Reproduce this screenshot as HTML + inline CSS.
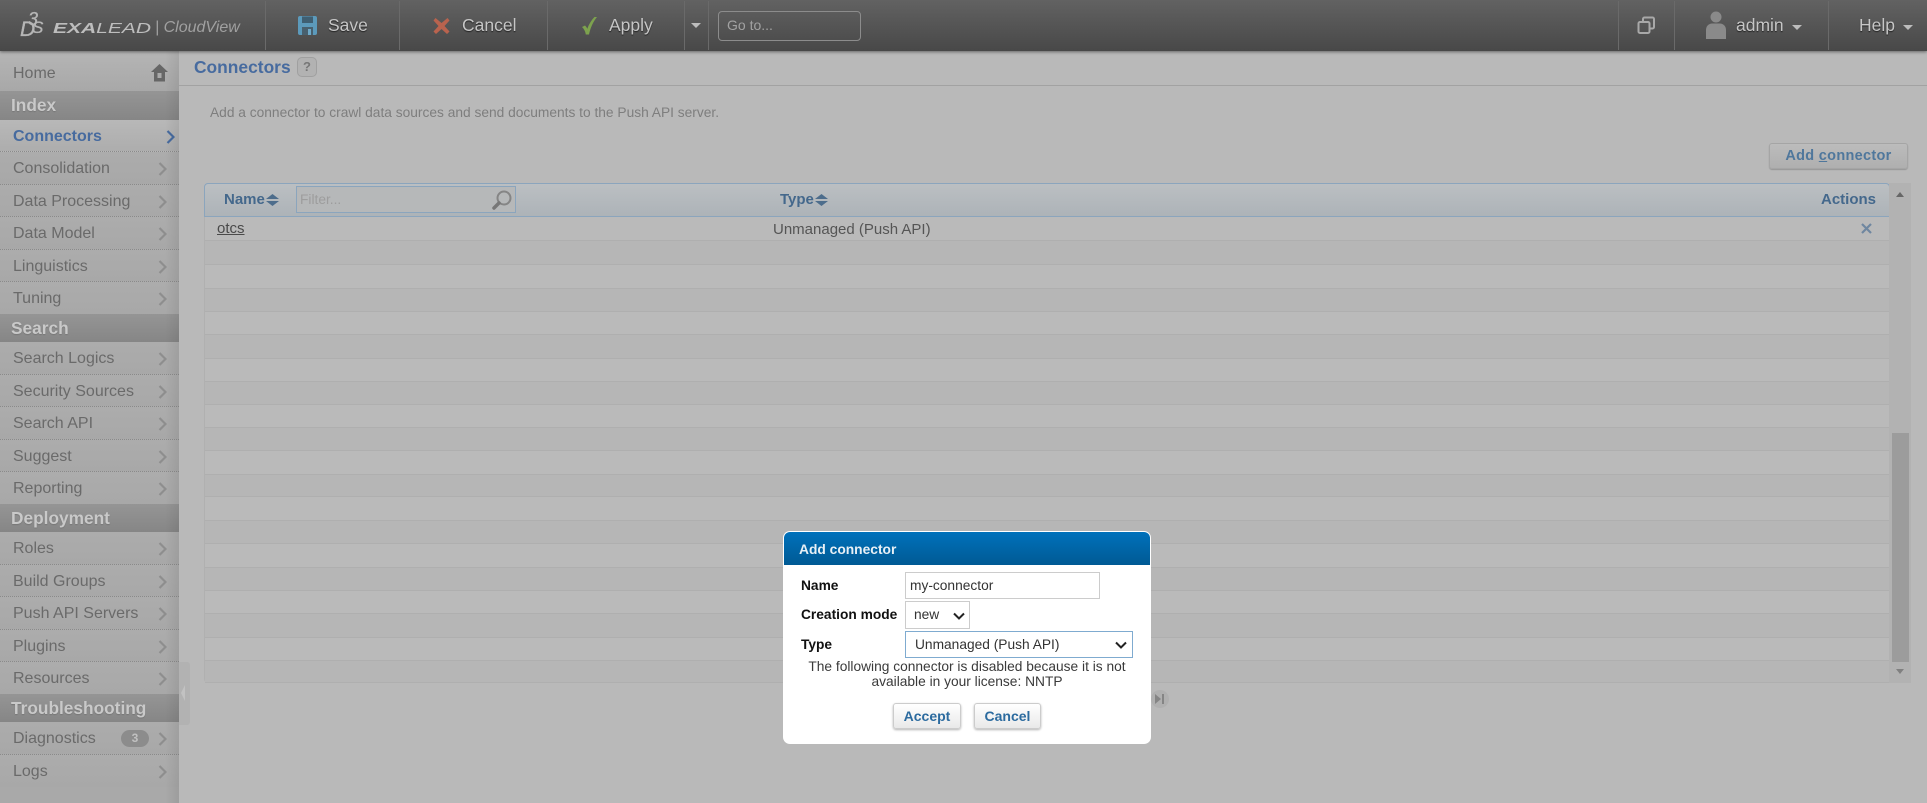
<!DOCTYPE html>
<html><head><meta charset="utf-8"><title>Connectors</title>
<style>
html,body{margin:0;padding:0;width:1927px;height:803px;overflow:hidden;background:#b9b9b9;font-family:"Liberation Sans",Arial,sans-serif;}
.a{position:absolute;white-space:nowrap}
#top{position:absolute;left:0;top:0;width:1927px;height:51px;background:linear-gradient(#626262,#484848);box-shadow:0 1px 3px rgba(0,0,0,.45);z-index:3}
.sep{position:absolute;top:1px;width:1px;height:49px;background:#6a6a6a}
.tt{position:absolute;top:12px;line-height:26px;font-size:17.5px;color:#c6c6c6;text-shadow:0 1px 1px #222;white-space:nowrap}
#side{position:absolute;left:0;top:51px;width:179px;height:752px;background:#a9a9a9;}
#shade{position:absolute;left:165px;top:51px;width:14px;height:752px;background:linear-gradient(90deg,rgba(0,0,0,0),rgba(0,0,0,.07));z-index:2}
.r{position:absolute;left:0;width:179px;box-sizing:border-box;padding-left:13px;padding-top:1px;font-size:16px;color:#6a6a6a;border-bottom:1px dotted #8a8a8a;background:linear-gradient(#acacac,#a8a8a8)}
.r svg{position:absolute;left:158px;top:50%;margin-top:-6px}
.h{position:absolute;left:0;width:179px;box-sizing:border-box;padding-left:11px;font-size:17.3px;font-weight:bold;color:#c9c9c9;background:linear-gradient(#959595,#868686);text-shadow:0 1px 1px #777}
.row{position:absolute;left:205px;width:1684px;box-sizing:border-box;border-bottom:1px solid #afafaf}
.th{position:absolute;top:183px;font-size:15px;font-weight:bold;color:#44688c;line-height:33px}
.lbl{position:absolute;font-size:13.75px;font-weight:bold;color:#111;white-space:nowrap;line-height:20px}
.fld{position:absolute;box-sizing:border-box;background:#fff;border:1px solid #ccc;font-size:13.75px;color:#333;white-space:nowrap}
.btn{position:absolute;top:703px;height:26px;box-sizing:border-box;border:1px solid #ccc;border-radius:3px;background:linear-gradient(#fff,#e9e9e9);box-shadow:0 1px 2px rgba(0,0,0,.3);font-size:14px;font-weight:bold;color:#2c6b9f;text-align:center;line-height:24px}
</style></head><body>

<div id="top">
  <svg class="a" style="left:20px;top:9px" width="30" height="30" viewBox="0 0 30 30" font-family="Liberation Sans" font-style="italic" fill="#b6b6b6" stroke="#b6b6b6" stroke-width=".35"><text x="8" y="16" font-size="18">3</text><text x="0" y="27" font-size="21">D</text><text x="12" y="24" font-size="17">S</text></svg>
  <div class="a" style="left:53px;top:20px;font-size:15px;line-height:17px;font-weight:bold;font-style:italic;color:#bdbdbd;transform:scaleX(1.4);transform-origin:0 0;letter-spacing:0"><span>EXA</span><span style="font-weight:normal">LEAD</span></div>
  <div class="a" style="left:155px;top:18px;font-size:16px;line-height:20px;font-style:italic;color:#a0a0a0">| CloudView</div>
  <div class="sep" style="left:265px"></div><div class="sep" style="left:399px"></div><div class="sep" style="left:547px"></div><div class="sep" style="left:684px"></div><div class="sep" style="left:708px"></div>
  <div class="sep" style="left:1618px"></div><div class="sep" style="left:1674px"></div><div class="sep" style="left:1828px"></div>

  <svg class="a" style="left:297px;top:15px" width="21" height="21" viewBox="0 0 21 21"><path d="M1 3a2 2 0 0 1 2-2h15a2 2 0 0 1 2 2v15a2 2 0 0 1-2 2H3a2 2 0 0 1-2-2z" fill="#5c9abb"/><rect x="5" y="1.500" width="11" height="6.500" fill="#3f5f72"/><rect x="5" y="12" width="11" height="8" fill="#48606e"/><rect x="11" y="14" width="3" height="6" fill="#6fa9c8"/></svg>
  <div class="tt" style="left:328px">Save</div>
  <svg class="a" style="left:433px;top:17px" width="17" height="18" viewBox="0 0 17 18"><path d="M2.500 1L8.500 6 14.500 1 16.500 3.500 11.500 9 16.500 14.500 14 17 8.500 12 3 17 .5 14.500 5.500 9 .5 3.500z" fill="#b9634e"/></svg>
  <div class="tt" style="left:462px">Cancel</div>
  <svg class="a" style="left:581px;top:16px" width="17" height="19" viewBox="0 0 17 19"><path d="M16 1C12 6 9.500 11.500 8 18.500H4.800C4.300 15 3 13 1 11l3-1.500c1 1 1.800 2 2.300 3.200C8 8 10.500 4 13.500 1z" fill="#7da24e"/></svg>
  <div class="tt" style="left:609px">Apply</div>
  <div class="a" style="left:691px;top:23px;width:0;height:0;border-left:5.500px solid transparent;border-right:5.500px solid transparent;border-top:5px solid #bdbdbd"></div>
  <div class="a" style="left:718px;top:11px;width:143px;height:30px;box-sizing:border-box;border:1px solid #8c8c8c;border-radius:4px;font-size:14px;line-height:26px;color:#a2a2a2;padding-left:8px">Go to...</div>

  <svg class="a" style="left:1637px;top:16px" width="19" height="19" viewBox="0 0 19 19" fill="none" stroke="#a8a8a8" stroke-width="2"><rect x="1.500" y="6" width="11" height="11" rx="1.500"/><path d="M6 5V3a1.500 1.500 0 0 1 1.500-1.500h8A1.500 1.500 0 0 1 17 3v8a1.500 1.500 0 0 1-1.500 1.500H13"/></svg>
  <svg class="a" style="left:1705px;top:11px" width="22" height="28" viewBox="0 0 22 28"><circle cx="11" cy="6" r="5.500" fill="#8a8a8a"/><path d="M1 28V19c0-4 3-6.500 6-6.500h8c3 0 6 2.500 6 6.500v9z" fill="#8a8a8a"/></svg>
  <div class="tt" style="left:1736px">admin</div>
  <div class="a" style="left:1792px;top:25px;width:0;height:0;border-left:5.500px solid transparent;border-right:5.500px solid transparent;border-top:5px solid #bdbdbd"></div>
  <div class="tt" style="left:1859px">Help</div>
  <div class="a" style="left:1903px;top:25px;width:0;height:0;border-left:5.500px solid transparent;border-right:5.500px solid transparent;border-top:5px solid #bdbdbd"></div>
</div>

<svg width="0" height="0" style="position:absolute"><defs><symbol id="ch" viewBox="0 0 9 14"><path d="M1.500 1l6 6-6 6" fill="none" stroke="currentColor" stroke-width="2.200"/></symbol></defs></svg>

<div id="side"></div>
<div id="shade"></div>

<div class="r" style="top:51px;height:40px;line-height:41px;padding-top:2px;border:0;background:linear-gradient(#b5b5b5,#a8a8a8)">Home
  <svg class="a" style="left:151px;top:13px;margin-top:0" width="17" height="18" viewBox="0 0 17 18"><path d="M8.500 0L17 8h-3v9.500H3V8H0z" fill="#666"/><rect x="6.500" y="9" width="4" height="5" fill="#a9a9a9"/></svg></div>
<div class="h" style="top:91px;height:29px;line-height:29px">Index</div>
<div class="r" style="top:120px;height:32px;line-height:31px;font-weight:bold;color:#476b9f;background:linear-gradient(#b8b8b8,#adadad)">Connectors<svg width="9" height="14" style="color:#476b9f;left:166px"><use href="#ch"/></svg></div>
<div class="r" style="top:152px;height:33px;line-height:32px">Consolidation<svg width="9" height="14" style="color:#8e8e8e"><use href="#ch"/></svg></div>
<div class="r" style="top:185px;height:32px;line-height:31px">Data Processing<svg width="9" height="14" style="color:#8e8e8e"><use href="#ch"/></svg></div>
<div class="r" style="top:217px;height:33px;line-height:32px">Data Model<svg width="9" height="14" style="color:#8e8e8e"><use href="#ch"/></svg></div>
<div class="r" style="top:250px;height:32px;line-height:31px">Linguistics<svg width="9" height="14" style="color:#8e8e8e"><use href="#ch"/></svg></div>
<div class="r" style="top:282px;height:32px;line-height:32px;border:0">Tuning<svg width="9" height="14" style="color:#8e8e8e"><use href="#ch"/></svg></div>
<div class="h" style="top:314px;height:28px;line-height:29px">Search</div>
<div class="r" style="top:342px;height:33px;line-height:32px">Search Logics<svg width="9" height="14" style="color:#8e8e8e"><use href="#ch"/></svg></div>
<div class="r" style="top:375px;height:32px;line-height:31px">Security Sources<svg width="9" height="14" style="color:#8e8e8e"><use href="#ch"/></svg></div>
<div class="r" style="top:407px;height:33px;line-height:32px">Search API<svg width="9" height="14" style="color:#8e8e8e"><use href="#ch"/></svg></div>
<div class="r" style="top:440px;height:32px;line-height:31px">Suggest<svg width="9" height="14" style="color:#8e8e8e"><use href="#ch"/></svg></div>
<div class="r" style="top:472px;height:32px;line-height:32px;border:0">Reporting<svg width="9" height="14" style="color:#8e8e8e"><use href="#ch"/></svg></div>
<div class="h" style="top:504px;height:28px;line-height:29px">Deployment</div>
<div class="r" style="top:532px;height:33px;line-height:32px">Roles<svg width="9" height="14" style="color:#8e8e8e"><use href="#ch"/></svg></div>
<div class="r" style="top:565px;height:32px;line-height:31px">Build Groups<svg width="9" height="14" style="color:#8e8e8e"><use href="#ch"/></svg></div>
<div class="r" style="top:597px;height:33px;line-height:32px">Push API Servers<svg width="9" height="14" style="color:#8e8e8e"><use href="#ch"/></svg></div>
<div class="r" style="top:630px;height:32px;line-height:31px">Plugins<svg width="9" height="14" style="color:#8e8e8e"><use href="#ch"/></svg></div>
<div class="r" style="top:662px;height:32px;line-height:32px;border:0">Resources<svg width="9" height="14" style="color:#8e8e8e"><use href="#ch"/></svg></div>
<div class="h" style="top:694px;height:28px;line-height:29px">Troubleshooting</div>
<div class="r" style="top:722px;height:33px;line-height:32px">Diagnostics<svg width="9" height="14" style="color:#8e8e8e"><use href="#ch"/></svg>
  <div class="a" style="left:121px;top:8px;width:28px;height:17px;border-radius:9px;background:#8c8c8c;color:#c0c0c0;font-size:12px;font-weight:bold;line-height:17px;text-align:center">3</div></div>
<div class="r" style="top:755px;height:32px;line-height:31px;border:0">Logs<svg width="9" height="14" style="color:#8e8e8e"><use href="#ch"/></svg></div>

<div class="a" style="left:179px;top:662px;width:11px;height:63px;background:#b2b2b2;border-radius:0 3px 3px 0"></div>
<div class="a" style="left:181px;top:685px;width:0;height:0;border-top:8px solid transparent;border-bottom:8px solid transparent;border-right:4px solid #c2c2c2"></div>

<!-- Content -->
<div class="a" style="left:194px;top:56px;font-size:17.4px;font-weight:bold;color:#476b9f;line-height:22px">Connectors</div>
<div class="a" style="left:297px;top:57px;width:20px;height:20px;box-sizing:border-box;border:1px solid #a0a0a0;border-radius:5px;background:#b2b2b2;font-size:13px;font-weight:bold;color:#777;text-align:center;line-height:18px">?</div>
<div class="a" style="left:179px;top:85px;width:1748px;height:1px;background:#a2a2a2"></div>
<div class="a" style="left:210px;top:104px;font-size:13.75px;line-height:18px;color:#7e7e7e">Add a connector to crawl data sources and send documents to the Push API server.</div>

<div class="a" style="left:1769px;top:143px;width:139px;height:26px;box-sizing:border-box;border:1px solid #a5a5a5;border-radius:3px;background:linear-gradient(#bcbcbc,#afafaf);box-shadow:0 1px 1px rgba(0,0,0,.2);font-size:14.500px;font-weight:bold;color:#4f779c;text-align:center;line-height:25px;letter-spacing:.3px">Add <u>c</u>onnector</div>

<!-- Table rows -->
<div class="a" style="left:204px;top:216px;width:1685px;height:467px;background:#bababa;border-left:1px solid #b0b0b0;box-sizing:border-box;border-radius:0 0 0 4px"></div>
<div class="row" style="top:216px;height:25px"></div>
<div class="row" style="top:241px;height:24px;background:#b6b6b6"></div>
<div class="row" style="top:265px;height:24px"></div>
<div class="row" style="top:289px;height:23px;background:#b6b6b6"></div>
<div class="row" style="top:312px;height:23px"></div>
<div class="row" style="top:335px;height:24px;background:#b6b6b6"></div>
<div class="row" style="top:359px;height:23px"></div>
<div class="row" style="top:382px;height:23px;background:#b6b6b6"></div>
<div class="row" style="top:405px;height:23px"></div>
<div class="row" style="top:428px;height:23px;background:#b6b6b6"></div>
<div class="row" style="top:451px;height:24px"></div>
<div class="row" style="top:475px;height:22px;background:#b6b6b6"></div>
<div class="row" style="top:497px;height:24px"></div>
<div class="row" style="top:521px;height:23px;background:#b6b6b6"></div>
<div class="row" style="top:544px;height:24px"></div>
<div class="row" style="top:568px;height:23px;background:#b6b6b6"></div>
<div class="row" style="top:591px;height:23px"></div>
<div class="row" style="top:614px;height:24px;background:#b6b6b6"></div>
<div class="row" style="top:638px;height:23px"></div>
<div class="row" style="top:661px;height:22px;background:#b6b6b6"></div>

<!-- Table header -->
<div class="a" style="left:204px;top:183px;width:1686px;height:34px;box-sizing:border-box;border:1px solid #8ba5bd;border-radius:4px 4px 0 0;background:linear-gradient(#bbbfc2,#adb3b8)"></div>
<div class="th" style="left:224px">Name</div>
<svg class="a" style="left:266px;top:194px" width="13" height="12" viewBox="0 0 13 12"><path d="M6.500 0L13 5H0zM0 7h13l-6.500 5z" fill="#4d6d8c"/></svg>
<div class="a" style="left:296px;top:186px;width:220px;height:27px;box-sizing:border-box;border:1px solid #8ba5bd;background:#b6b8b9;font-size:13.75px;color:#9d9d9d;line-height:25px;padding-left:3px">Filter...</div>
<svg class="a" style="left:492px;top:190px" width="20" height="20" viewBox="0 0 20 20" fill="none" stroke="#858585"><circle cx="12" cy="8" r="6.500" stroke-width="2"/><path d="M7 13L2 18" stroke-width="3.500" stroke-linecap="round" stroke="#777"/></svg>
<div class="th" style="left:780px">Type</div>
<svg class="a" style="left:815px;top:194px" width="13" height="12" viewBox="0 0 13 12"><path d="M6.500 0L13 5H0zM0 7h13l-6.500 5z" fill="#4d6d8c"/></svg>
<div class="th" style="left:1821px">Actions</div>

<div class="a" style="left:217px;top:219px;font-size:15px;line-height:20px;color:#4a4a4a;text-decoration:underline">otcs</div>
<div class="a" style="left:773px;top:220px;font-size:15px;line-height:20px;color:#555">Unmanaged (Push API)</div>
<svg class="a" style="left:1861px;top:223px" width="11" height="11" viewBox="0 0 11 11"><path d="M1 1l9 9M10 1L1 10" stroke="#6f87a0" stroke-width="2.200"/></svg>

<!-- Scrollbar -->
<div class="a" style="left:1889px;top:183px;width:22px;height:500px;background:#b2b2b2"></div>
<div class="a" style="left:1892px;top:433px;width:17px;height:229px;background:#9c9c9c"></div>
<div class="a" style="left:1896px;top:192px;width:0;height:0;border-left:4.500px solid transparent;border-right:4.500px solid transparent;border-bottom:5px solid #666"></div>
<div class="a" style="left:1896px;top:669px;width:0;height:0;border-left:4.500px solid transparent;border-right:4.500px solid transparent;border-top:5px solid #808080"></div>

<!-- pager -->
<div class="a" style="left:1151px;top:690px;width:18px;height:18px;border-radius:9px;background:#b0b0b0"></div>
<svg class="a" style="left:1155px;top:694px" width="10" height="10" viewBox="0 0 10 10"><path d="M0 0l6 5-6 5zM7 0h2v10H7z" fill="#858585"/></svg>

<!-- Dialog -->
<div class="a" style="left:783px;top:531px;width:368px;height:213px;background:#fff;border-radius:7px;z-index:5">
  <div class="a" style="left:1px;top:1px;width:366px;height:33px;border-radius:6px 6px 0 0;background:linear-gradient(#0071bb,#005a94)"></div>
  <div class="a" style="left:16px;top:9px;font-size:13.8px;font-weight:bold;color:#e8f0f6;line-height:20px">Add connector</div>
</div>
<div style="position:absolute;left:0;top:0;z-index:6">
  <div class="lbl" style="left:801px;top:576px">Name</div>
  <div class="lbl" style="left:801px;top:605px">Creation mode</div>
  <div class="lbl" style="left:801px;top:635px">Type</div>
  <div class="fld" style="left:905px;top:572px;width:195px;height:27px;line-height:25px;padding-left:4px">my-connector</div>
  <div class="fld" style="left:905px;top:601px;width:65px;height:28px;line-height:26px;padding-left:8px">new
    <svg class="a" style="left:47px;top:10px" width="12" height="8" viewBox="0 0 12 8"><path d="M1 1.500l5 5 5-5" fill="none" stroke="#222" stroke-width="2"/></svg></div>
  <div class="fld" style="left:905px;top:631px;width:228px;height:27px;line-height:25px;padding-left:9px;border-color:#7fabd0">Unmanaged (Push API)
    <svg class="a" style="left:209px;top:9px" width="12" height="8" viewBox="0 0 12 8"><path d="M1 1.500l5 5 5-5" fill="none" stroke="#222" stroke-width="2"/></svg></div>
  <div class="a" style="left:783px;top:659px;width:368px;text-align:center;font-size:13.75px;line-height:15px;color:#3a3a3a;white-space:normal;box-sizing:border-box;padding:0 10px">The following connector is disabled because it is not<br>available in your license: NNTP</div>
  <div class="btn" style="left:893px;width:68px">Accept</div>
  <div class="btn" style="left:974px;width:67px">Cancel</div>
</div>
</body></html>
